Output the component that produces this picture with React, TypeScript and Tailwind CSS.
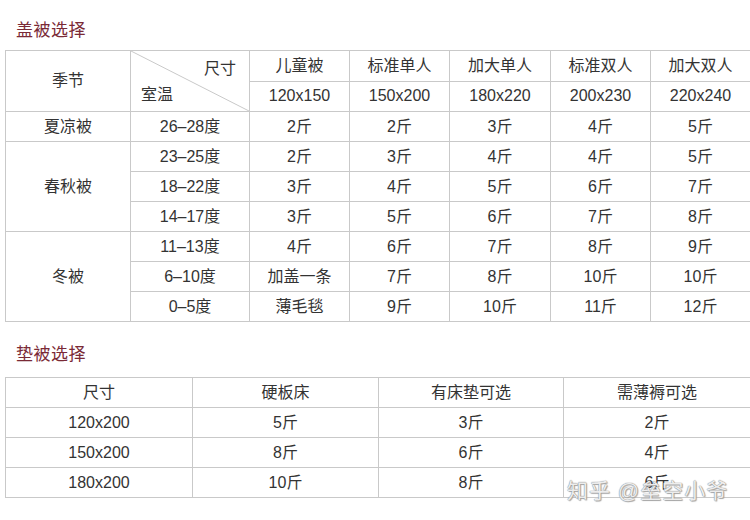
const font = { fontFamily: '"Liberation Sans", "Noto Sans CJK SC", sans-serif' }

const coverRows: { season?: string; span?: number; temp: string; vals: string[] }[] = [
    { season: "夏凉被", span: 1, temp: "26–28度", vals: ["2斤", "2斤", "3斤", "4斤", "5斤"] },
    { season: "春秋被", span: 3, temp: "23–25度", vals: ["2斤", "3斤", "4斤", "4斤", "5斤"] },
    { temp: "18–22度", vals: ["3斤", "4斤", "5斤", "6斤", "7斤"] },
    { temp: "14–17度", vals: ["3斤", "5斤", "6斤", "7斤", "8斤"] },
    { season: "冬被", span: 3, temp: "11–13度", vals: ["4斤", "6斤", "7斤", "8斤", "9斤"] },
    { temp: "6–10度", vals: ["加盖一条", "7斤", "8斤", "10斤", "10斤"] },
    { temp: "0–5度", vals: ["薄毛毯", "9斤", "10斤", "11斤", "12斤"] },
]

const sizes = [
    { name: "儿童被", size: "120x150" },
    { name: "标准单人", size: "150x200" },
    { name: "加大单人", size: "180x220" },
    { name: "标准双人", size: "200x230" },
    { name: "加大双人", size: "220x240" },
]

const padRows = [
    ["120x200", "5斤", "3斤", "2斤"],
    ["150x200", "8斤", "6斤", "4斤"],
    ["180x200", "10斤", "8斤", "6斤"],
]

const cell = "border border-[#c9c9c9] h-[30px] p-0 text-center align-middle font-normal"

function Title({ text }: { text: string }) {
    return (
        <div className="pl-[16px] text-[17px] leading-[22px] text-[#7a2a36] tracking-[0.5px]">
            {text}
        </div>
    )
}

export default function App() {
    return (
        <div className="relative w-[750px] h-[520px] bg-white text-[#333] text-[16px] overflow-hidden" style={font}>
            <div className="pt-[20px] h-[50px]">
                <Title text="盖被选择" />
            </div>
            <table className="ml-[5px] w-[745px] table-fixed border-collapse">
                <colgroup>
                    <col className="w-[125px]" />
                    <col className="w-[119px]" />
                    <col className="w-[100px]" />
                    <col className="w-[100px]" />
                    <col className="w-[101px]" />
                    <col className="w-[100px]" />
                    <col className="w-[100px]" />
                </colgroup>
                <thead>
                    <tr>
                        <th rowSpan={2} className={cell}>季节</th>
                        <th rowSpan={2} className={`${cell} relative`}>
                            <svg className="absolute inset-0 w-full h-full" preserveAspectRatio="none" viewBox="0 0 100 100">
                                <line x1="0" y1="0" x2="100" y2="100" stroke="#c9c9c9" strokeWidth="1" vectorEffect="non-scaling-stroke" />
                            </svg>
                            <div className="relative flex flex-col h-[60px] px-[10px] pt-[8px]">
                                <span className="self-end pr-[3px] leading-[20px]">尺寸</span>
                                <span className="self-start leading-[20px] mt-[6px]">室温</span>
                            </div>
                        </th>
                        {sizes.map((s) => (
                            <th key={s.name} className={cell}>{s.name}</th>
                        ))}
                    </tr>
                    <tr>
                        {sizes.map((s) => (
                            <th key={s.size} className={cell}>{s.size}</th>
                        ))}
                    </tr>
                </thead>
                <tbody>
                    {coverRows.map((r) => (
                        <tr key={r.temp}>
                            {r.season && <td rowSpan={r.span} className={cell}>{r.season}</td>}
                            <td className={cell}>{r.temp}</td>
                            {r.vals.map((v, i) => (
                                <td key={i} className={cell}>{v}</td>
                            ))}
                        </tr>
                    ))}
                </tbody>
            </table>

            <div className="pt-[22px] h-[55px]">
                <Title text="垫被选择" />
            </div>
            <table className="ml-[5px] w-[745px] table-fixed border-collapse">
                <colgroup>
                    <col className="w-[187px]" />
                    <col className="w-[186px]" />
                    <col className="w-[185px]" />
                    <col className="w-[187px]" />
                </colgroup>
                <thead>
                    <tr>
                        {["尺寸", "硬板床", "有床垫可选", "需薄褥可选"].map((h) => (
                            <th key={h} className={cell}>{h}</th>
                        ))}
                    </tr>
                </thead>
                <tbody>
                    {padRows.map((r) => (
                        <tr key={r[0]}>
                            {r.map((v, i) => (
                                <td key={i} className={cell}>{v}</td>
                            ))}
                        </tr>
                    ))}
                </tbody>
            </table>

            {/* watermark */}
            <div
                className="absolute left-[567px] top-[478px] text-[21px] leading-[26px] tracking-[1px] text-white/85"
                style={{ textShadow: "0 0 1px #888, 0 0 1px #888, 1px 1px 1px #aaa" }}
            >
                知乎 @垒空小爷
            </div>
        </div>
    )
}
